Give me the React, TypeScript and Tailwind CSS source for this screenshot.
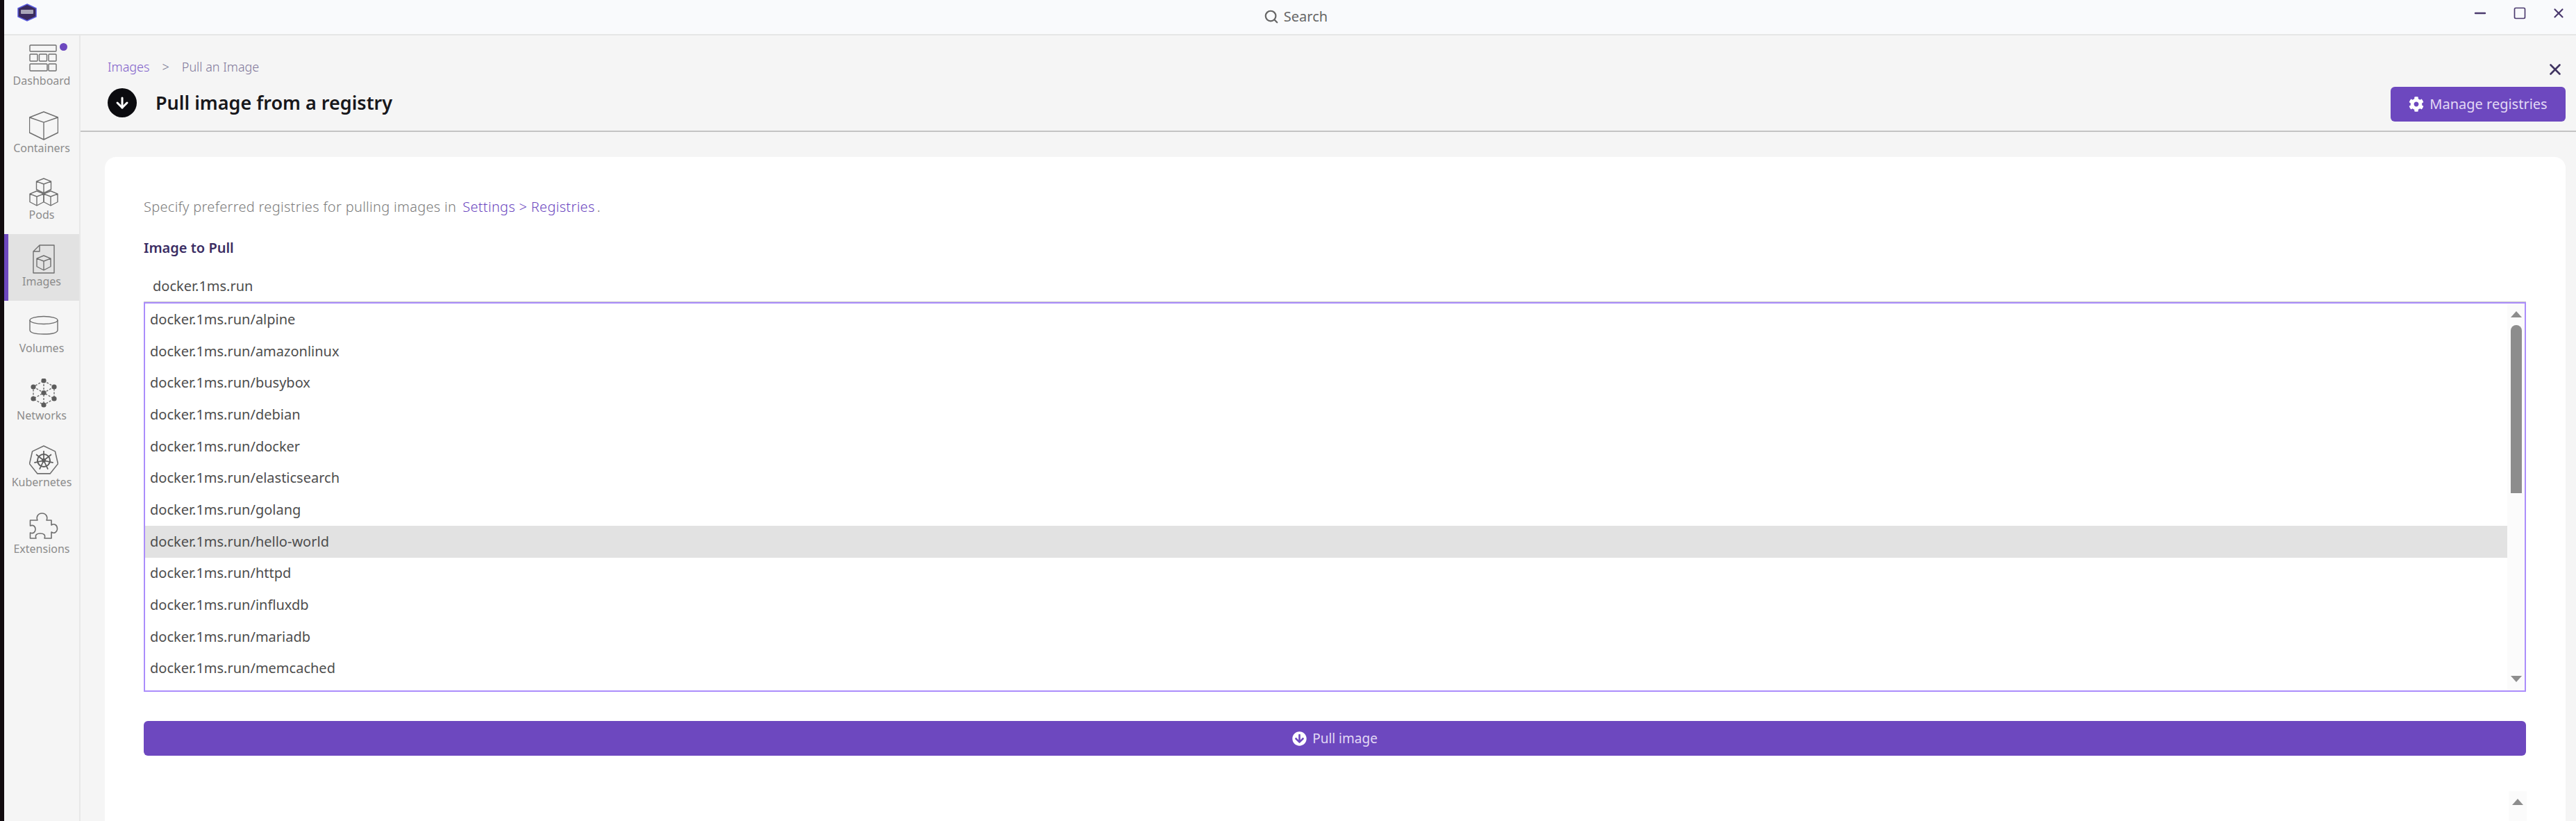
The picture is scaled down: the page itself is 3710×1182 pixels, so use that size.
import { ArrowDown, Minus, Search, Square, X } from 'lucide-react';
import { FaArrowCircleDown, FaCog } from 'react-icons/fa';
import type { ReactNode } from 'react';

const iconStroke = '#6f6f6f';

function Cube({ cx, top, w, h }: { cx: number; top: number; w: number; h: number }) {
    const l = cx - w / 2;
    const r = cx + w / 2;
    const s = h * 0.2;
    const mid = top + h * 0.38;
    const low = top + h * 0.75;
    const bottom = top + h;
    return (
        <path d={`M${cx} ${top}L${r} ${top + s}V${low}L${cx} ${bottom}L${l} ${low}V${top + s}ZM${l} ${top + s}L${cx} ${mid}L${r} ${top + s}M${cx} ${mid}V${bottom}`} />
    );
}

function NavSvg({ children, className }: { children: ReactNode; className: string }) {
    return (
        <svg viewBox="0 0 42 42" fill="none" stroke={iconStroke} strokeWidth={1.4} strokeLinejoin="round" className={className}>
            {children}
        </svg>
    );
}

const DashboardIcon = () => (
    <NavSvg className="w-[42px] h-[42px]">
        <rect x="1" y="2" width="38" height="9" rx="1" />
        <rect x="1" y="15" width="11" height="10" rx="1" />
        <rect x="14.5" y="15" width="11" height="10" rx="1" />
        <rect x="28" y="15" width="11" height="10" rx="1" />
        <rect x="1" y="29" width="25" height="10" rx="1" />
        <rect x="28" y="29" width="11" height="10" rx="1" />
    </NavSvg>
);

const ContainersIcon = () => (
    <NavSvg className="w-[42px] h-[42px]">
        <Cube cx={21} top={1} w={41} h={40} />
    </NavSvg>
);

const PodsIcon = () => (
    <NavSvg className="w-[42px] h-[42px]">
        <Cube cx={21} top={1} w={21} h={21} />
        <Cube cx={11} top={19} w={20} h={21} />
        <Cube cx={31} top={19} w={20} h={21} />
    </NavSvg>
);

const ImagesIcon = () => (
    <NavSvg className="w-[42px] h-[42px]">
        <path d="M15 1H36V41H6V10ZM15 1V10H6" />
        <Cube cx={21} top={16} w={20} h={21} />
    </NavSvg>
);

const VolumesIcon = () => (
    <NavSvg className="w-[42px] h-[42px]">
        <ellipse cx="21" cy="13" rx="20" ry="5.5" />
        <path d="M1 13V27C1 31 8 33 21 33C34 33 41 31 41 27V13" />
    </NavSvg>
);

const NetworksIcon = () => {
    const nodes = [[21, 3], [36, 12], [36, 29], [21, 38], [6, 29], [6, 12], [21, 20.5]];
    return (
        <NavSvg className="w-[42px] h-[42px]">
            <g strokeDasharray="3 2">
                <path d="M21 3L36 12V29L21 38L6 29V12ZM21 3V38M6 12L36 29M36 12L6 29" />
            </g>
            {nodes.map(([x, y]) => (
                <circle key={`${x}-${y}`} cx={x} cy={y} r="3.6" fill="#5c5c5c" stroke="none" />
            ))}
        </NavSvg>
    );
};

const KubernetesIcon = () => {
    const spokes = [0, 1, 2, 3, 4, 5, 6].map((i) => (i * 360) / 7);
    return (
        <NavSvg className="w-[42px] h-[42px]">
            <path d="M21 1L37.4 8.9L41.5 26.7L30.1 40.9H11.9L0.5 26.7L4.6 8.9Z" strokeWidth={1.6} />
            <circle cx="21" cy="22" r="9" strokeWidth={2} stroke="#5c5c5c" />
            {spokes.map((a) => (
                <line key={a} x1="21" y1="22" x2="21" y2="8" stroke="#5c5c5c" strokeWidth={1.7} transform={`rotate(${a} 21 22)`} />
            ))}
            <circle cx="21" cy="22" r="3" fill="#5c5c5c" stroke="none" />
        </NavSvg>
    );
};

const ExtensionsIcon = () => (
    <NavSvg className="w-[42px] h-[42px]">
        <path
            d="M1.5 12H12C10 8 12 2 18.5 2C25 2 27 8 25 12H32V19C36 16 40.5 19 40.5 24C40.5 29 36 32 32 29V38H22C24 33 21 31 16 31C11 31 8 33 10 38H1.5V30C6 32 9 29 9 25C9 21 6 18 1.5 20Z"
            strokeWidth={1.6}
        />
    </NavSvg>
);

const navItems = [
    { id: 'dashboard', label: 'Dashboard', icon: DashboardIcon, dot: true },
    { id: 'containers', label: 'Containers', icon: ContainersIcon },
    { id: 'pods', label: 'Pods', icon: PodsIcon },
    { id: 'images', label: 'Images', icon: ImagesIcon, active: true },
    { id: 'volumes', label: 'Volumes', icon: VolumesIcon },
    { id: 'networks', label: 'Networks', icon: NetworksIcon },
    { id: 'kubernetes', label: 'Kubernetes', icon: KubernetesIcon },
    { id: 'extensions', label: 'Extensions', icon: ExtensionsIcon },
];

const suggestions = [
    'alpine',
    'amazonlinux',
    'busybox',
    'debian',
    'docker',
    'elasticsearch',
    'golang',
    'hello-world',
    'httpd',
    'influxdb',
    'mariadb',
    'memcached',
];

const Arrow = ({ down }: { down?: boolean }) => (
    <svg viewBox="0 0 16 9" className="w-[16px] h-[9px] shrink-0" fill="#8d8d8d">
        <polygon points={down ? '0,0 16,0 8,9' : '8,0 16,9 0,9'} />
    </svg>
);

export default function App() {
    return (
        <div className="flex w-full h-screen overflow-hidden bg-[#f5f5f5] font-['Noto_Sans',sans-serif]">
            <div className="w-[6px] shrink-0 bg-[#120c10]" />
            <div className="flex-1 min-w-0 flex flex-col">
                <header className="relative h-[51px] shrink-0 bg-[#f9fafc] border-b-2 border-[#e6e6e6] flex items-center justify-center">
                    <svg viewBox="0 0 28 26" className="absolute left-[19px] top-[5px] w-[28px] h-[26px]">
                        <polygon points="14,1 27,7 27,19 14,25 1,19 1,7" fill="#3a2b5e" stroke="#5b5ce0" strokeWidth="1.5" />
                        <rect x="5" y="9" width="18" height="6" rx="1" fill="#a9a6b8" />
                    </svg>
                    <div className="flex items-center gap-[7px] text-[#666666] translate-x-[8px] -translate-y-[1px]">
                        <Search size={22} strokeWidth={2.4} />
                        <span className="text-[20px]">Search</span>
                    </div>
                    <div className="absolute right-[14px] top-[7px] flex items-center gap-[35px] text-[#4b3a6e]">
                        <Minus size={24} strokeWidth={2.4} />
                        <Square size={20} strokeWidth={2} />
                        <X size={22} strokeWidth={2.4} />
                    </div>
                </header>

                <div className="flex-1 min-h-0 flex">
                    <nav className="w-[110px] shrink-0 border-r-2 border-[#e8e8e8] -mt-[3px]">
                        {navItems.map((item) => (
                            <div
                                key={item.id}
                                className={`relative h-[96.3px] flex flex-col items-center justify-end pb-[18px] border-l-[6px] ${
                                    item.active ? 'bg-[#e2e2e2] border-[#6d48bf]' : 'border-transparent'
                                }`}
                            >
                                {item.dot && <span className="absolute left-[74px] top-[14px] w-[11px] h-[11px] rounded-full bg-[#6d48bf]" />}
                                <item.icon />
                                <span className="-ml-[6px] mt-[1px] text-[16px] leading-[20px] text-[#8c8c8c]">{item.label}</span>
                            </div>
                        ))}
                    </nav>

                    <main className="flex-1 min-w-0 flex flex-col">
                        <div className="h-[139px] shrink-0 border-b-2 border-[#c4c4c4] pl-[39px] pr-[15px] flex justify-between">
                            <div>
                                <div className="mt-[33px] flex items-center text-[18px] leading-[24px] font-light">
                                    <span className="text-[#7d5cc9]">Images</span>
                                    <span className="mx-[18px] text-[#6e6e8a]">&gt;</span>
                                    <span className="text-[#7f7799]">Pull an Image</span>
                                </div>
                                <div className="mt-[19px] flex items-center gap-[27px]">
                                    <div className="w-[42px] h-[42px] rounded-full bg-[#0b0b0f] flex items-center justify-center">
                                        <ArrowDown size={24} color="#ffffff" strokeWidth={3} />
                                    </div>
                                    <h1 className="text-[27px] leading-[36px] font-semibold text-[#17171b]">Pull image from a registry</h1>
                                </div>
                            </div>
                            <div className="flex flex-col items-end">
                                <X size={26} color="#3f3360" strokeWidth={2.4} className="mt-[36px] mr-[2px]" />
                                <button className="mt-[12px] w-[252px] h-[50px] rounded-[6px] bg-[#6d48bf] flex items-center justify-center gap-[8px] text-[#e2d9f5] text-[20px]">
                                    <FaCog size={22} color="#ffffff" />
                                    <span>Manage registries</span>
                                </button>
                            </div>
                        </div>

                        <div className="flex-1 min-h-0 flex flex-col mt-[36px] ml-[35px] mr-[15px] pl-[56px] pr-[57px] bg-white rounded-t-2xl">
                            <p className="mt-[59px] text-[20px] leading-[26px] tracking-[0.3px] font-light text-[#7c7c7c]">
                                Specify preferred registries for pulling images in
                                <span className="ml-[9px] text-[#6d48bf]">Settings &gt; Registries</span>
                                <span className="ml-[3px]">.</span>
                            </p>
                            <label className="mt-[33px] text-[20px] leading-[26px] font-semibold text-[#3b2d63]">Image to Pull</label>
                            <div className="mt-[29px] pl-[13px] text-[20px] leading-[26px] text-[#4d4d4d]">docker.1ms.run</div>

                            <div className="mt-[10px] h-[561px] shrink-0 flex border-2 border-[#ab8dfb] shadow-[0_-1px_0_#c8c8c8]">
                                <ul className="flex-1 min-w-0">
                                    {suggestions.map((name) => (
                                        <li
                                            key={name}
                                            className={`h-[45.7px] flex items-center pl-[7px] text-[20px] text-[#4d4d4d] ${
                                                name === 'hello-world' ? 'bg-[#e2e2e2]' : ''
                                            }`}
                                        >
                                            docker.1ms.run/{name}
                                        </li>
                                    ))}
                                </ul>
                                <div className="w-[25px] shrink-0 bg-[#fbfbfb] flex flex-col items-center pt-[11px] pb-[12px]">
                                    <Arrow />
                                    <div className="mt-[11px] w-[16px] h-[242px] rounded-t-full bg-[#8d8d8d]" />
                                    <div className="mt-auto">
                                        <Arrow down />
                                    </div>
                                </div>
                            </div>

                            <button className="mt-[42px] h-[50px] shrink-0 rounded-[6px] bg-[#6d48bf] flex items-center justify-center gap-[8px] text-[#e2d9f5] text-[19px]">
                                <FaArrowCircleDown size={21} color="#ffffff" />
                                <span>Pull image</span>
                            </button>

                            <div className="h-[44px] shrink-0 flex justify-end mt-[51px] -mr-[1px]">
                                <div className="w-[26px] bg-[#fbfbfb] flex justify-center pt-[11px]">
                                    <Arrow />
                                </div>
                            </div>
                        </div>
                    </main>
                </div>
            </div>
        </div>
    );
}
